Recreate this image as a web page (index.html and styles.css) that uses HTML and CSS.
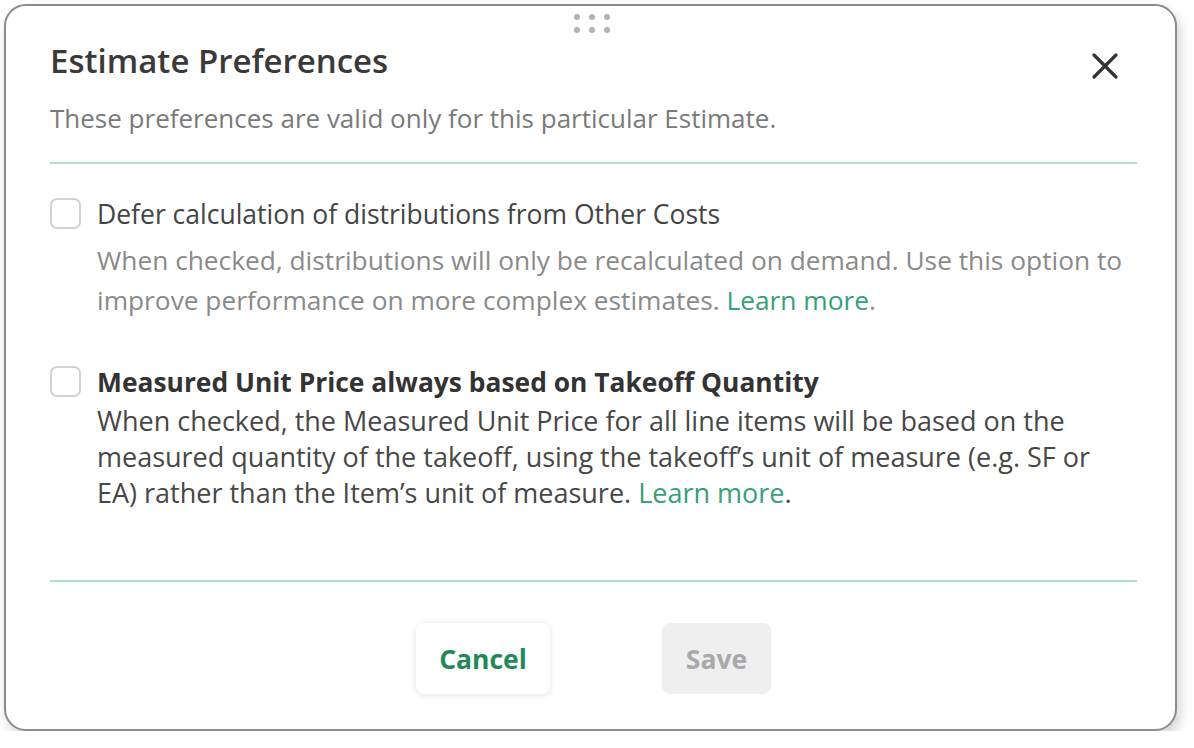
FILE: index.html
```html
<!DOCTYPE html>
<html lang="en">
<head>
  <meta charset="UTF-8" />
  <meta name="viewport" content="width=device-width, initial-scale=1.0"/>
  <title>Estimate Preferences</title>
  <link rel="stylesheet" href="styles.css">
</head>
<body>

  <div class="dialog">
    <div class="drag-handle">
      <span></span><span></span><span></span>
      <span></span><span></span><span></span>
    </div>

    <div class="dialog-head">
      <h2 class="dialog-title">Estimate Preferences</h2>
      <button class="close-btn" aria-label="Close">
        <svg width="28" height="28" viewBox="0 0 28 28">
          <path d="M3 3 L25 25 M25 3 L3 25" stroke="#333" stroke-width="3.2" stroke-linecap="round" fill="none"/>
        </svg>
      </button>
    </div>
    <p class="dialog-sub">These preferences are valid only for this particular Estimate.</p>

    <div class="dialog-body">
      <label class="option">
        <input type="checkbox" class="check" />
        <div class="option-text">
          <div class="option-label">Defer calculation of distributions from Other Costs</div>
          <div class="option-desc">When checked, distributions will only be recalculated on demand. Use this option to improve performance on more complex estimates. <a href="#" class="learn">Learn more</a>.</div>
        </div>
      </label>

      <label class="option option-alt">
        <input type="checkbox" class="check" />
        <div class="option-text">
          <div class="option-label">Measured Unit Price always based on Takeoff Quantity</div>
          <div class="option-desc">When checked, the Measured Unit Price for all line items will be based on the measured quantity of the takeoff, using the takeoff’s unit of measure (e.g. SF or EA) rather than the Item’s unit of measure. <a href="#" class="learn">Learn more</a>.</div>
        </div>
      </label>
    </div>

    <div class="dialog-foot">
      <button class="btn btn-cancel">Cancel</button>
      <button class="btn btn-save" disabled>Save</button>
    </div>
  </div>

</body>
</html>
```

FILE: styles.css
```css
* { box-sizing: border-box; }
body {
  margin: 0;
  padding: 4px 0 0 4px;
  background: #fff;
  font-family: "Open Sans", "Liberation Sans", sans-serif;
}
.dialog {
  width: 1173px;
  height: 727px;
  background: #fff;
  border: 2px solid #8c8c8c;
  border-radius: 22px;
  box-shadow: 3px 6px 12px rgba(0, 0, 0, 0.18);
  padding: 0 38px 0 44px;
  display: flex;
  flex-direction: column;
}
.drag-handle {
  align-self: center;
  display: grid;
  grid-template-columns: repeat(3, 6px);
  gap: 7px 9px;
  margin: 8px 0 0 -3px;
}
.drag-handle span {
  width: 6px;
  height: 6px;
  border-radius: 50%;
  background: #b3b3b3;
}
.dialog-head {
  display: flex;
  justify-content: space-between;
  align-items: center;
  margin-top: 9px;
}
.dialog-title {
  margin: 0;
  font-size: 33px;
  font-weight: 600;
  color: #3a3a3a;
  line-height: 38px;
}
.close-btn {
  border: none;
  background: none;
  padding: 0;
  margin: 10px 18px 0 0;
  cursor: pointer;
  display: flex;
}
.dialog-sub {
  margin: 22px 0 0;
  font-size: 26px;
  line-height: 32px;
  color: #7a7a7a;
  padding-bottom: 28px;
  border-bottom: 2px solid #b4dccb;
}
.dialog-body {
  flex: 1;
  border-bottom: 2px solid #b4dccb;
  padding-top: 34px;
}
.option {
  display: flex;
  gap: 16px;
  cursor: pointer;
}
.option + .option { margin-top: 46px; }
.check {
  appearance: none;
  margin: 0;
  flex: none;
  width: 31px;
  height: 31px;
  border: 2px solid #d2d2d2;
  border-radius: 7px;
  background: #fff;
}
.option-label {
  font-size: 26.5px;
  line-height: 32px;
  color: #444;
}
.option-desc {
  margin-top: 10px;
  font-size: 26.3px;
  line-height: 40px;
  color: #8a8a8a;
}
.option-alt .option-label {
  font-weight: 700;
  font-size: 26.4px;
  color: #333;
}
.option-alt .option-desc {
  max-width: 1010px;
  margin-top: 5px;
  font-size: 27px;
  line-height: 36px;
  color: #474747;
}
.learn {
  color: #35a07a;
  text-decoration: none;
}
.dialog-foot {
  display: flex;
  justify-content: center;
  gap: 112px;
  padding: 41px 0 35px;
}
.btn {
  height: 71px;
  border: none;
  border-radius: 8px;
  font-family: inherit;
  font-size: 26.5px;
  font-weight: 700;
  cursor: pointer;
}
.btn-cancel {
  width: 134px;
  background: #fff;
  color: #1f8a57;
  box-shadow: 0 1px 6px rgba(0, 0, 0, 0.12);
}
.btn-save {
  width: 109px;
  background: #efefef;
  color: #a9a9a9;
  cursor: default;
}
```
